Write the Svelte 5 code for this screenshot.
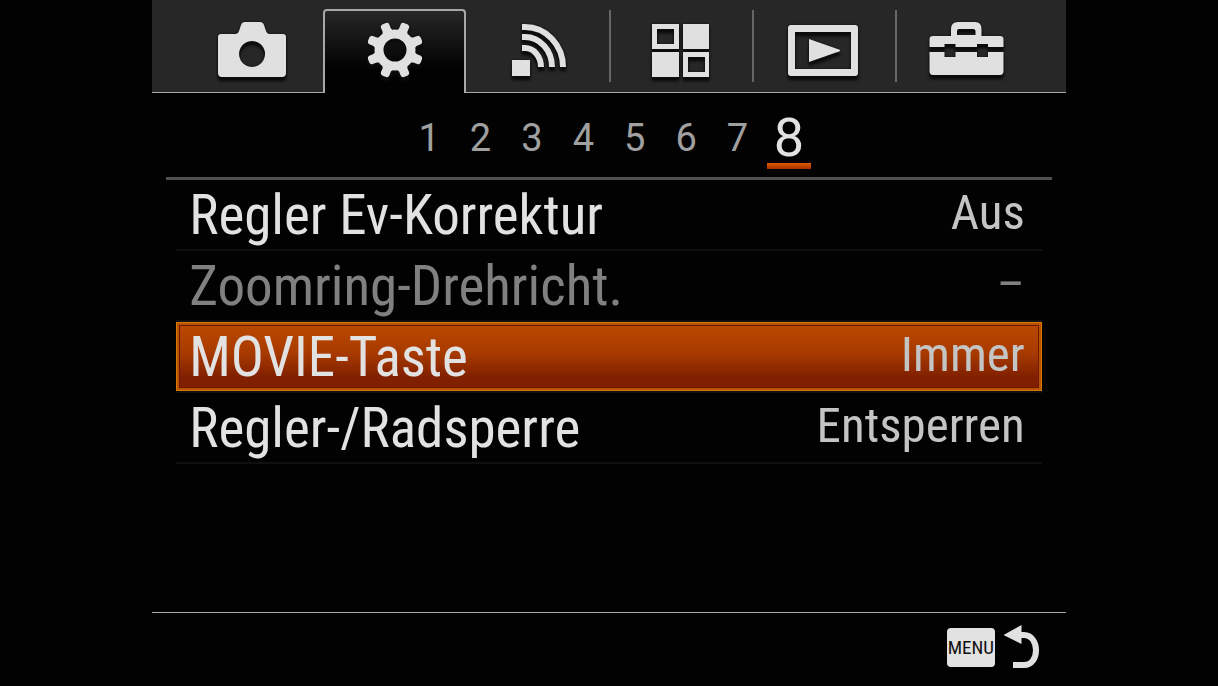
<script>
    let activeTab = 'settings'
    let activePage = 8
    let selected = 2

    const tabs = [
        { id: 'camera', label: 'Kamera' },
        { id: 'settings', label: 'Benutzereinstellungen' },
        { id: 'wireless', label: 'Drahtlos' },
        { id: 'apps', label: 'Applikation' },
        { id: 'playback', label: 'Wiedergabe' },
        { id: 'setup', label: 'Einstellung' },
    ]

    const pages = [1, 2, 3, 4, 5, 6, 7, 8]

    const items = [
        { label: 'Regler Ev-Korrektur', value: 'Aus' },
        { label: 'Zoomring-Drehricht.', value: '–', disabled: true },
        { label: 'MOVIE-Taste', value: 'Immer' },
        { label: 'Regler-/Radsperre', value: 'Entsperren' },
    ]

    const teeth = [0, 1, 2, 3, 4, 5, 6, 7].map(n => 22.5 + n * 45)
</script>

<style>
    :global(body) {
        margin: 0;
        background: #020202;
    }

    .screen {
        display: flex;
        flex-direction: column;
        width: 75%;
        min-height: 100vh;
        margin: 0 auto;
        color: #e2e2e2;
        font-family: "Roboto Condensed", Roboto, "Liberation Sans", sans-serif;
    }

    button {
        margin: 0;
        padding: 0;
        border: 0;
        background: none;
        color: inherit;
        font: inherit;
        cursor: pointer;
    }

    ul {
        margin: 0;
        padding: 0;
        list-style: none;
    }

    .tabs {
        display: grid;
        grid-template-columns: repeat(6, 1fr);
        height: 92px;
        padding: 0 28px;
        border-bottom: 1px solid #a8a8a8;
        background: #272727;
    }

    .tab {
        display: flex;
        justify-content: center;
        align-items: flex-start;
        padding-top: 20px;
    }

    .tab.divided {
        background: linear-gradient(#666, #666) 0 10px / 2px 72px no-repeat;
    }

    .tab.active {
        margin: 9px 0 -1px;
        padding-top: 9px;
        border: 2px solid #a8a8a8;
        border-bottom: 0;
        border-radius: 4px 4px 0 0;
        background: linear-gradient(#272727, #020202 70%);
    }

    .tab svg {
        width: 80px;
        height: 60px;
        overflow: visible;
        fill: #e0e0e0;
        filter: drop-shadow(0 0 1px #0c0c0c) drop-shadow(0 4px 1px #0c0c0c);
    }

    .line {
        fill: none;
        stroke: #e0e0e0;
        stroke-width: 6;
    }

    .ring {
        fill: none;
        stroke: #e0e0e0;
        stroke-width: 9;
    }

    .pages {
        display: grid;
        grid-template-columns: repeat(8, 1fr);
        width: 45%;
        height: 84px;
        margin: 0 auto;
        font-family: Roboto, "Liberation Sans", sans-serif;
    }

    .page {
        display: flex;
        flex-direction: column;
        align-items: center;
        color: #a0a0a0;
        font-size: 38px;
        line-height: 90px;
    }

    .page.active {
        color: #e2e2e2;
        font-size: 54px;
    }

    .page.active span {
        height: 70px;
    }

    .page.active::after {
        content: '';
        width: 44px;
        height: 6px;
        background: linear-gradient(#e05a00, #a83000);
    }

    .menu {
        flex: 1;
        margin: 0 14px;
        border-top: 3px solid #505050;
    }

    .menu ul {
        padding: 0 10px;
    }

    .menu li {
        border-bottom: 2px solid #101010;
    }

    .row {
        display: flex;
        justify-content: space-between;
        align-items: flex-start;
        box-sizing: border-box;
        width: 100%;
        height: 69px;
        padding: 0 17px 0 13px;
        font-size: 55px;
        line-height: 70px;
        white-space: nowrap;
    }

    .value {
        color: #c4c4c4;
        font-size: 49px;
        line-height: 66px;
    }

    .row:disabled, .row:disabled .value {
        color: #808080;
    }

    .row.selected {
        background: linear-gradient(#bc4a00, #a83a00 45%, #802000 80%);
        box-shadow: inset 0 0 0 1px #d87800, inset 0 0 0 3px #b85400, inset 0 0 0 4px #6c1800;
    }

    footer {
        display: flex;
        justify-content: flex-end;
        align-items: flex-start;
        height: 62px;
        padding: 11px 26px 0 0;
        border-top: 1px solid #a8a8a8;
    }

    .back {
        display: flex;
        align-items: center;
        gap: 8px;
    }

    .key {
        width: 48px;
        border-radius: 4px;
        background: #e2e2e2;
        color: #101010;
        font-size: 19px;
        line-height: 39px;
        text-align: center;
    }

    .back svg {
        width: 37px;
        height: 46px;
        fill: #e2e2e2;
    }
</style>

<div class="screen">
    <nav class="tabs">
        {#each tabs as tab, i}
            <button
                class="tab"
                class:active={activeTab === tab.id}
                class:divided={i > 2}
                aria-label={tab.label}
                on:click={() => activeTab = tab.id}
            >
                <svg viewBox="0 0 80 60" aria-hidden="true">
                    {#if tab.id === 'camera'}
                        <path fill-rule="evenodd" d="M9 14H24Q26 14 27 11L29 5Q30 2 33 2H48Q51 2 52 5L54 11Q55 14 57 14H71Q74 14 74 17V53Q74 57 70 57H10Q6 57 6 53V17Q6 14 9 14ZM40 21a13 13 0 1 0 .1 0Z" />
                    {:else if tab.id === 'settings'}
                        {#each teeth as angle}
                            <path d="M34 12L35.500 8.500V4Q35.500 2 38 1.500H42Q44.500 2 44.500 4V8.500L46 12Z" transform="rotate({angle} 40 30)" />
                        {/each}
                        <circle class="ring" cx="40" cy="30" r="16" />
                    {:else if tab.id === 'wireless'}
                        <rect x="14" y="40" width="18" height="16" />
                        <path class="line" d="M24 7H27A38 40 0 0 1 65 47M24 17H27A27 30 0 0 1 54 47" />
                        <path class="line" d="M24 28H27A16 19 0 0 1 43 47" />
                    {:else if tab.id === 'apps'}
                        <path fill-rule="evenodd" d="M12 4H39V29H12ZM17 9V24H34V9ZM43 4H69V29H43ZM12 32H39V57H12ZM43 32H69V57H43ZM48 37V52H65V37Z" />
                    {:else if tab.id === 'playback'}
                        <path fill-rule="evenodd" d="M8 5H72Q75 5 75 8V53Q75 56 72 56H8Q5 56 5 53V8Q5 5 8 5ZM12 12V49H68V12Z" />
                        <path d="M26 19L56 29.500Q58.500 30.500 56 31.500L26 42Z" />
                    {:else}
                        <path d="M25 16V9Q25 2 32 2H49Q55.500 2 55.500 9V16H74Q77.500 16 77.500 19V27H62V24H51V27H29.500V24H18.500V27H3.500V19Q3.500 16 7 16ZM31 15H49.500V11Q49.500 9 47 9H33Q31 9 31 11Z" fill-rule="evenodd" />
                        <path d="M3.500 32H18.500V37H29.500V32H51V37H62V32H77.500V51Q77.500 55 74 55H7Q3.500 55 3.500 51Z" />
                    {/if}
                </svg>
            </button>
        {/each}
    </nav>

    <nav class="pages">
        {#each pages as page}
            <button class="page" class:active={activePage === page} on:click={() => activePage = page}>
                <span>{page}</span>
            </button>
        {/each}
    </nav>

    <main class="menu">
        <ul>
            {#each items as item, i}
                <li>
                    <button
                        class="row"
                        class:selected={selected === i}
                        disabled={item.disabled}
                        on:click={() => selected = i}
                    >
                        <span>{item.label}</span>
                        <span class="value">{item.value}</span>
                    </button>
                </li>
            {/each}
        </ul>
    </main>

    <footer>
        <button class="back">
            <span class="key">MENU</span>
            <svg viewBox="0 0 37 46" aria-hidden="true">
                <path d="M.5 11L18.500 1V20Z" />
                <path class="line" d="M18 11H21C29 11 33 19 33 26C33 34 29 41 21 41H10" />
            </svg>
        </button>
    </footer>
</div>
